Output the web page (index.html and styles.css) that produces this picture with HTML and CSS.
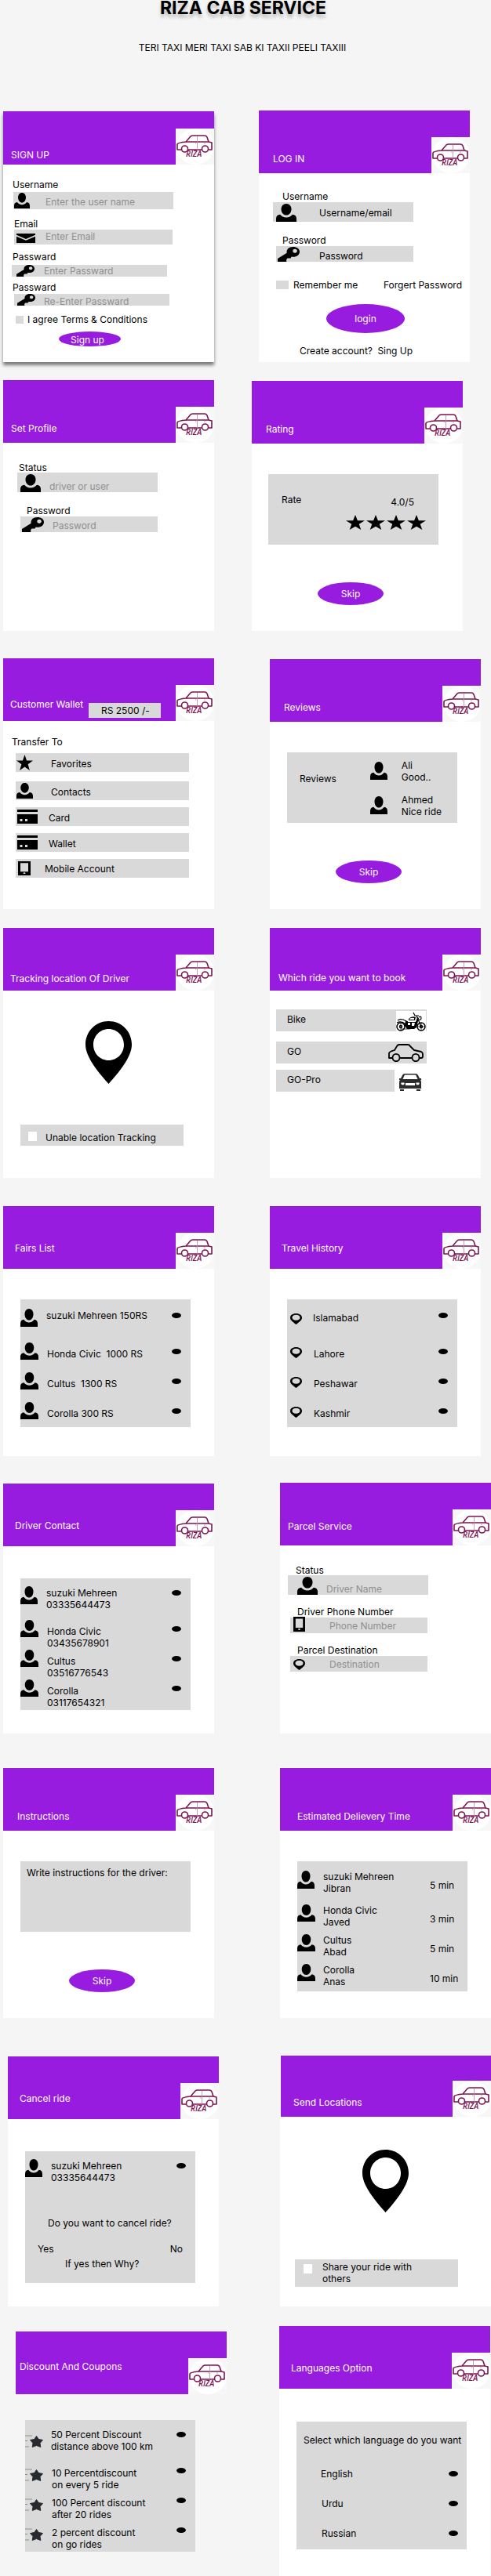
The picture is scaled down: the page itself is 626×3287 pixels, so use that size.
FILE: index.html
```
<!DOCTYPE html>
<html lang="en">
<head>
<meta charset="utf-8">
<meta name="viewport" content="width=device-width, initial-scale=1">
<title>Riza Cab Service</title>
<link rel="stylesheet" href="styles.css">
</head>
<body>
<svg class="sprite" width="0" height="0" aria-hidden="true">
  <symbol id="logo" viewBox="0 0 49 46">
    <rect width="49" height="46" fill="#f7f7f7"/>
    <ellipse cx="25" cy="23" rx="24" ry="23" fill="#fff"/>
    <g fill="none" stroke="#7d1552" stroke-width="1.6" stroke-linejoin="round">
      <path d="M7 27H2v-7q1-2 11-3l6-7q1-1 3-1h15q2 0 3 2l2 6"/>
      <path d="M13 17h29l4 1v9h-4M16 27h17"/>
      <circle cx="11.500" cy="26" r="4"/>
      <circle cx="37.500" cy="26" r="4"/>
    </g>
    <path d="M27.500 10v17M25 19h1.500M36 19h2" fill="none" stroke="#b98ba6" stroke-width="0.800"/>
    <text x="13" y="36" class="logo-text">RIZA</text>
  </symbol>
  <symbol id="user" viewBox="0 0 22 23" preserveAspectRatio="none">
    <path d="M11 0c3.400 0 5.500 3 5.500 7s-2.300 7.600-5.500 7.600S5.500 11 5.500 7 7.600 0 11 0z"/>
    <path d="M0 23v-4c0-3 1.500-5 4.300-5.200 1.600 2.400 3.900 3.600 6.700 3.600s5.100-1.200 6.700-3.600C20.500 14 22 16 22 19v4z"/>
  </symbol>
  <symbol id="key" viewBox="0 0 28 19" preserveAspectRatio="none">
    <path fill-rule="evenodd" d="M19.500 0C24.500 0 28 2.500 28 6.200s-3.500 6.600-8 6.600c-1 0-1.500 0-2.300-.2l-1.200 1.900h-4l-1.300 1.800V19H0v-4l11.600-7.300C11 3 14.500 0 19.500 0zM22 2.800a2.800 2.500 0 1 0 .1 0z"/>
  </symbol>
  <symbol id="mail" viewBox="0 0 24 13" preserveAspectRatio="none">
    <path d="M0 0h24v2L12 7.500 0 2zM0 4l12 5.500L24 4v9H0z"/>
  </symbol>
  <symbol id="star" viewBox="0 0 24 20" preserveAspectRatio="none">
    <path d="M12 0l2.900 7.500H24l-7.300 4.800L19.300 20 12 15.400 4.700 20l2.600-7.700L0 7.500h9.100z"/>
  </symbol>
  <symbol id="card" viewBox="0 0 26 18" preserveAspectRatio="none">
    <path fill-rule="evenodd" d="M0 0h26v3H0zM0 6h26v12H0zM3.500 12v3h3v-3zM10 12v3h3v-3z"/>
  </symbol>
  <symbol id="phone" viewBox="0 0 16 19" preserveAspectRatio="none">
    <path fill-rule="evenodd" d="M0 0h16v19H0zM3 2.500v11.500h10V2.500zM6.500 16a1.500 1 0 1 0 3 0 1.500 1 0 1 0-3 0z"/>
  </symbol>
  <symbol id="pin" viewBox="0 0 59 80">
    <path fill-rule="evenodd" d="M29.500 0C46 0 59 13 59 30c0 16-17 36-29.500 50C17 66 0 46 0 30 0 13 13 0 29.500 0zm0 10C18.500 10 10 19 10 30s8.500 20 19.500 20S49 41 49 30 40.500 10 29.500 10z"/>
  </symbol>
  <symbol id="marker" viewBox="0 0 15 14">
    <path fill-rule="evenodd" d="M7.500 0C12 0 15 2.300 15 5.500S11.500 11 7.500 14C3.500 11 0 8.700 0 5.500S3 0 7.500 0zm0 1.800C4.500 1.800 2.500 3.300 2.500 5.300s2 3.500 5 3.500 5-1.500 5-3.500-2-3.500-5-3.500z"/>
  </symbol>
  <symbol id="bike" viewBox="0 0 38 26">
    <rect width="38" height="26" fill="#fff"/>
    <g fill="none" stroke="#000" stroke-width="1.500">
      <circle cx="6" cy="20" r="5"/>
      <circle cx="32" cy="20" r="5"/>
      <circle cx="6" cy="20" r="1.500"/>
      <circle cx="32" cy="20" r="1.500"/>
      <path d="M22 2l2 4 5 0M26 6l6 14M2 12q3-2 7-1l6 3M1 15q6-3 11 2M29 8q3-2 3 1t-3 2" stroke-width="1.200"/>
      <path d="M6 23h12M6 15v10M27 20h10M32 15v10" stroke-width="0.700"/>
    </g>
    <path d="M12 12l3 2h10l2-6 2 1-3 12-3 2H14l-3-4zM16 10q4-4 9-2l-1 4h-8z"/>
    <path d="M15 15h3v3h-3zM20 15h4l-1 4h-3z" fill="#fff"/>
    <path d="M17 10q3-2 6-1v2h-6z" fill="#fff"/>
  </symbol>
  <symbol id="sedan" viewBox="0 0 45 23">
    <g fill="none" stroke="#000" stroke-width="1.800" stroke-linejoin="round">
      <path d="M6 18H1v-6q0-2 7-4l3-5q1-2 3-2h11q2 0 3 2l5 5 9 2q2 1 2 3v3q0 2-2 2h-2M15 18h15"/>
      <ellipse cx="10" cy="17.500" rx="4.500" ry="4.700"/>
      <ellipse cx="35" cy="17.500" rx="4.500" ry="4.700"/>
    </g>
  </symbol>
  <symbol id="front" viewBox="0 0 28 22">
    <path fill="#2b2b2b" fill-rule="evenodd" d="M7 0h14q2 0 3 2l2 4h2v2h-1q1 1 1 3v8H0v-8q0-2 1-3H0V6h2l2-4q1-2 3-2zM7 1.500L4.500 7h19L21 1.500zM8 12v3h12v-3zM2.500 11.500a2.200 2 0 1 0 4 0zM21.500 11.500a2.200 2 0 1 0 4 0zM1 20h5v2H1zM22 20h5v2h-5z"/>
  </symbol>
  <symbol id="faststar" viewBox="0 0 24 16">
    <path d="M0 1h9M0 7.500h3M0 15h5" stroke="#8f8f8f" stroke-width="1.200"/>
    <path d="M14.500 1.500l2.700 4 5.300 1-3.500 4 .8 5-5.300-2-5.300 2 .8-5-3.500-4 5.300-1z" fill="#272b30" stroke="#272b30" stroke-width="1" stroke-linejoin="round"/>
  </symbol>
</svg>

<header class="page-head">
  <h1>RIZA CAB SERVICE</h1>
  <p>TERI TAXI MERI TAXI SAB KI TAXII PEELI TAXIII</p>
</header>

<main>
  <div class="pair pair-a">
    <form class="screen signup">
      <div class="bar"><h2>SIGN UP</h2><svg class="logo" role="img" aria-label="Riza logo"><use href="#logo"/></svg></div>
      <div class="body">
        <div class="field">
          <label for="su-name">Username</label>
          <div class="box"><svg class="icon" width="20" height="20"><use href="#user"/></svg><input id="su-name" type="text" placeholder="Enter the user name"></div>
        </div>
        <div class="field email">
          <label for="su-mail">Email</label>
          <div class="box"><svg class="icon" width="24" height="12"><use href="#mail"/></svg><input id="su-mail" type="email" placeholder="Enter Email"></div>
        </div>
        <div class="field pass">
          <label for="su-pass">Passward</label>
          <div class="box"><svg class="icon" width="23" height="15"><use href="#key"/></svg><input id="su-pass" type="password" placeholder="Enter Passward"></div>
        </div>
        <div class="field repeat">
          <label for="su-again">Passward</label>
          <div class="box"><svg class="icon" width="23" height="15"><use href="#key"/></svg><input id="su-again" type="password" placeholder="Re-Enter Passward"></div>
        </div>
        <label class="check"><input type="checkbox"><span>I agree Terms &amp; Conditions</span></label>
        <button class="oval small" type="button">Sign up</button>
      </div>
    </form>

    <form class="screen login">
      <div class="bar"><h2>LOG IN</h2><svg class="logo" role="img" aria-label="Riza logo"><use href="#logo"/></svg></div>
      <div class="body">
        <div class="field">
          <label for="li-name">Username</label>
          <div class="box"><svg class="icon" width="26" height="23"><use href="#user"/></svg><input id="li-name" type="text" placeholder="Username/email"></div>
        </div>
        <div class="field pass">
          <label for="li-pass">Password</label>
          <div class="box"><svg class="icon" width="28" height="19"><use href="#key"/></svg><input id="li-pass" type="password" placeholder="Password"></div>
        </div>
        <div class="options">
          <label class="check"><input type="checkbox"><span>Remember me</span></label>
          <a href="#forgot">Forgert Password</a>
        </div>
        <button class="oval large" type="button">login</button>
        <p class="create">Create account? <a href="#signup">Sing Up</a></p>
      </div>
    </form>
  </div>

  <div class="pair pair-b">
    <form class="screen profile">
      <div class="bar"><h2>Set Profile</h2><svg class="logo" role="img" aria-label="Riza logo"><use href="#logo"/></svg></div>
      <div class="body">
        <div class="field tight">
          <label for="sp-status">Status</label>
          <div class="box"><svg class="icon" width="26" height="23"><use href="#user"/></svg><input id="sp-status" type="text" placeholder="driver or user"></div>
        </div>
        <div class="field tight pass">
          <label for="sp-pass">Password</label>
          <div class="box"><svg class="icon" width="28" height="19"><use href="#key"/></svg><input id="sp-pass" type="password" placeholder="Password"></div>
        </div>
      </div>
    </form>

    <section class="screen lined rating">
      <div class="bar"><h2>Rating</h2><svg class="logo" role="img" aria-label="Riza logo"><use href="#logo"/></svg></div>
      <div class="body">
        <div class="panel">
          <span>Rate</span>
          <div class="score">
            <span>4.0/5</span>
            <div class="stars" role="img" aria-label="4 stars">
              <svg width="24" height="19"><use href="#star"/></svg>
              <svg width="24" height="19"><use href="#star"/></svg>
              <svg width="24" height="19"><use href="#star"/></svg>
              <svg width="24" height="19"><use href="#star"/></svg>
            </div>
          </div>
        </div>
        <button class="oval" type="button">Skip</button>
      </div>
    </section>
  </div>

  <div class="pair pair-c">
    <section class="screen wallet">
      <div class="bar"><h2>Customer Wallet</h2><output class="balance">RS 2500 /-</output><svg class="logo" role="img" aria-label="Riza logo"><use href="#logo"/></svg></div>
      <div class="body">
        <h3>Transfer To</h3>
        <ul class="targets">
          <li><svg width="21" height="20"><use href="#star"/></svg><span>Favorites</span></li>
          <li><svg width="21" height="20"><use href="#user"/></svg><span>Contacts</span></li>
          <li class="near"><svg width="26" height="18"><use href="#card"/></svg><span>Card</span></li>
          <li class="near"><svg width="26" height="18"><use href="#card"/></svg><span>Wallet</span></li>
          <li class="near phone"><svg width="16" height="18"><use href="#phone"/></svg><span>Mobile Account</span></li>
        </ul>
      </div>
    </section>

    <section class="screen lined reviews">
      <div class="bar"><h2>Reviews</h2><svg class="logo" role="img" aria-label="Riza logo"><use href="#logo"/></svg></div>
      <div class="body">
        <div class="panel">
          <h3>Reviews</h3>
          <ul>
            <li><svg width="22" height="23"><use href="#user"/></svg><span>Ali<br>Good..</span></li>
            <li><svg width="22" height="23"><use href="#user"/></svg><span>Ahmed<br>Nice ride</span></li>
          </ul>
        </div>
        <button class="oval" type="button">Skip</button>
      </div>
    </section>
  </div>

  <div class="pair pair-d">
    <section class="screen lined tracking">
      <div class="bar"><h2>Tracking location Of Driver</h2><svg class="logo" role="img" aria-label="Riza logo"><use href="#logo"/></svg></div>
      <div class="body">
        <svg class="pin" width="59" height="80" role="img" aria-label="Location"><use href="#pin"/></svg>
        <label class="check strip"><input type="checkbox"><span>Unable location Tracking</span></label>
      </div>
    </section>

    <section class="screen lined rides">
      <div class="bar"><h2>Which ride you want to book</h2><svg class="logo" role="img" aria-label="Riza logo"><use href="#logo"/></svg></div>
      <div class="body">
        <ul>
          <li><span>Bike</span><svg class="bike" width="38" height="26"><use href="#bike"/></svg></li>
          <li><span>GO</span><svg class="sedan" width="45" height="23"><use href="#sedan"/></svg></li>
          <li class="split"><span>GO-Pro</span><svg width="28" height="22"><use href="#front"/></svg></li>
        </ul>
      </div>
    </section>
  </div>

  <div class="pair pair-e">
    <section class="screen lined fairs">
      <div class="bar"><h2>Fairs List</h2><svg class="logo" role="img" aria-label="Riza logo"><use href="#logo"/></svg></div>
      <div class="body">
        <div class="panel list">
          <label><svg width="22" height="23"><use href="#user"/></svg><span>suzuki Mehreen 150RS</span><input type="radio" name="fair"></label>
          <label><svg width="23" height="22"><use href="#user"/></svg><span>Honda Civic&nbsp; 1000 RS</span><input type="radio" name="fair"></label>
          <label><svg width="23" height="22"><use href="#user"/></svg><span>Cultus&nbsp; 1300 RS</span><input type="radio" name="fair"></label>
          <label><svg width="23" height="22"><use href="#user"/></svg><span>Corolla 300 RS</span><input type="radio" name="fair"></label>
        </div>
      </div>
    </section>

    <section class="screen lined travel">
      <div class="bar"><h2>Travel History</h2><svg class="logo" role="img" aria-label="Riza logo"><use href="#logo"/></svg></div>
      <div class="body">
        <div class="panel list">
          <label><svg width="15" height="14"><use href="#marker"/></svg><span>Islamabad</span><input type="radio" name="trip"></label>
          <label><svg width="15" height="14"><use href="#marker"/></svg><span>Lahore</span><input type="radio" name="trip"></label>
          <label><svg width="15" height="14"><use href="#marker"/></svg><span>Peshawar</span><input type="radio" name="trip"></label>
          <label><svg width="15" height="14"><use href="#marker"/></svg><span>Kashmir</span><input type="radio" name="trip"></label>
        </div>
      </div>
    </section>
  </div>

  <div class="pair pair-f">
    <section class="screen lined contact">
      <div class="bar"><h2>Driver Contact</h2><svg class="logo" role="img" aria-label="Riza logo"><use href="#logo"/></svg></div>
      <div class="body">
        <div class="panel list">
          <label><svg width="22" height="23"><use href="#user"/></svg><span>suzuki Mehreen<br>03335644473</span><input type="radio" name="driver"></label>
          <label><svg width="23" height="22"><use href="#user"/></svg><span>Honda Civic<br>03435678901</span><input type="radio" name="driver"></label>
          <label><svg width="23" height="22"><use href="#user"/></svg><span>Cultus<br>03516776543</span><input type="radio" name="driver"></label>
          <label><svg width="23" height="22"><use href="#user"/></svg><span>Corolla<br>03117654321</span><input type="radio" name="driver"></label>
        </div>
      </div>
    </section>

    <form class="screen parcel">
      <div class="bar"><h2>Parcel Service</h2><svg class="logo" role="img" aria-label="Riza logo"><use href="#logo"/></svg></div>
      <div class="body">
        <div class="field tight status">
          <label for="pa-name">Status</label>
          <div class="box"><svg class="icon" width="26" height="23"><use href="#user"/></svg><input id="pa-name" type="text" placeholder="Driver Name"></div>
        </div>
        <div class="field tight">
          <label for="pa-phone">Driver Phone Number</label>
          <div class="box"><svg class="icon" width="15" height="19"><use href="#phone"/></svg><input id="pa-phone" type="tel" placeholder="Phone Number"></div>
        </div>
        <div class="field tight">
          <label for="pa-dest">Parcel Destination</label>
          <div class="box"><svg class="icon" width="15" height="14"><use href="#marker"/></svg><input id="pa-dest" type="text" placeholder="Destination"></div>
        </div>
      </div>
    </form>
  </div>

  <div class="pair pair-f pair-g">
    <form class="screen lined instructions">
      <div class="bar"><h2>Instructions</h2><svg class="logo" role="img" aria-label="Riza logo"><use href="#logo"/></svg></div>
      <div class="body">
        <textarea aria-label="Instructions" placeholder="Write instructions for the driver:"></textarea>
        <button class="oval" type="button">Skip</button>
      </div>
    </form>

    <section class="screen lined estimate">
      <div class="bar"><h2>Estimated Delievery Time</h2><svg class="logo" role="img" aria-label="Riza logo"><use href="#logo"/></svg></div>
      <div class="body">
        <ul class="panel list">
          <li><svg width="22" height="23"><use href="#user"/></svg><span>suzuki Mehreen<br>Jibran</span><time>5 min</time></li>
          <li><svg width="23" height="22"><use href="#user"/></svg><span>Honda Civic<br>Javed</span><time>3 min</time></li>
          <li><svg width="23" height="22"><use href="#user"/></svg><span>Cultus<br>Abad</span><time>5 min</time></li>
          <li><svg width="23" height="22"><use href="#user"/></svg><span>Corolla<br>Anas</span><time>10 min</time></li>
        </ul>
      </div>
    </section>
  </div>

  <div class="pair pair-h">
    <section class="screen lined cancel">
      <div class="bar"><h2>Cancel ride</h2><svg class="logo" role="img" aria-label="Riza logo"><use href="#logo"/></svg></div>
      <div class="body">
        <div class="panel list">
          <label><svg width="22" height="23"><use href="#user"/></svg><span>suzuki Mehreen<br>03335644473</span><input type="radio" name="cancel"></label>
          <p class="ask">Do you want to cancel ride?</p>
          <div class="answers"><button type="button">Yes</button><button type="button">No</button></div>
          <p class="why">If yes then Why?</p>
        </div>
      </div>
    </section>

    <section class="screen send">
      <div class="bar"><h2>Send Locations</h2><svg class="logo" role="img" aria-label="Riza logo"><use href="#logo"/></svg></div>
      <div class="body">
        <svg class="pin" width="59" height="80" role="img" aria-label="Location"><use href="#pin"/></svg>
        <label class="check strip"><input type="checkbox"><span>Share your ride with<br>others</span></label>
      </div>
    </section>
  </div>

  <div class="pair pair-i">
    <section class="screen coupons">
      <div class="bar"><h2>Discount And Coupons</h2><svg class="logo" role="img" aria-label="Riza logo"><use href="#logo"/></svg></div>
      <div class="body">
        <div class="panel list">
          <label><svg width="24" height="16"><use href="#faststar"/></svg><span>50 Percent Discount<br>distance above 100 km</span><input type="radio" name="coupon"></label>
          <label><svg width="24" height="16"><use href="#faststar"/></svg><span>10 Percentdiscount<br>on every 5 ride</span><input type="radio" name="coupon"></label>
          <label><svg width="24" height="16"><use href="#faststar"/></svg><span>100 Percent discount<br>after 20 rides</span><input type="radio" name="coupon"></label>
          <label><svg width="24" height="16"><use href="#faststar"/></svg><span>2 percent discount<br>on go rides</span><input type="radio" name="coupon"></label>
        </div>
      </div>
    </section>

    <section class="screen languages">
      <div class="bar"><h2>Languages Option</h2><svg class="logo" role="img" aria-label="Riza logo"><use href="#logo"/></svg></div>
      <div class="body">
        <div class="panel">
          <p>Select which language do you want</p>
          <label><span>English</span><input type="radio" name="lang"></label>
          <label><span>Urdu</span><input type="radio" name="lang"></label>
          <label><span>Russian</span><input type="radio" name="lang"></label>
        </div>
      </div>
    </section>
  </div>
</main>
</body>
</html>
```

FILE: styles.css
```
* {
  box-sizing: border-box;
}

body {
  margin: 0;
  background: #f5f5f5;
  color: #000;
  font: 12px/15px Inter, "Liberation Sans", sans-serif;
}

h1, h2, h3, p, ul {
  margin: 0;
  padding: 0;
  font-size: 12px;
  font-weight: 400;
}

ul {
  list-style: none;
}

a {
  color: inherit;
  text-decoration: none;
}

svg {
  display: block;
  flex: none;
}

input, button, textarea {
  font: inherit;
  color: inherit;
  margin: 0;
  padding: 0;
  border: 0;
  background: none;
}

.sprite {
  display: none;
}

.logo-text {
  font: italic 600 10px "Open Sans", sans-serif;
  fill: #7d1552;
}

/* Page heading */

.page-head {
  height: 141px;
  text-align: center;
}

.page-head h1 {
  padding-right: 6px;
  font-size: 23px;
  line-height: 20px;
  font-weight: 700;
  text-shadow: 0 4px 4px rgba(0, 0, 0, 0.25);
}

.page-head p {
  padding: 33px 8px 0 0;
}

/* Pairs of screens */

.pair {
  display: flex;
  gap: 71px;
  padding: 0 13px 0 4px;
}

.pair-a { gap: 57px; padding-right: 27px; }
.pair-b { gap: 48px; padding-right: 36px; margin-top: 23px; }
.pair-c { margin-top: 35px; }
.pair-d { margin-top: 23px; }
.pair-e { margin-top: 35px; }
.pair-f { gap: 84px; padding-right: 0; margin-top: 34px; }
.pair-g { margin-top: 43px; }
.pair-h { gap: 78px; padding: 0 0 0 10px; margin-top: 48px; }
.pair-i { gap: 67px; padding: 0 1px 0 20px; margin-top: 25px; }

.screen {
  flex: 1 1 0;
  min-width: 0;
  min-height: 320px;
  background: #fff;
}

.lined {
  padding-top: 1px;
}

.bar {
  display: flex;
  align-items: flex-end;
  height: 80px;
  background: #971cdf;
  color: #fff;
}

.bar h2 {
  padding: 0 0 11px 18px;
  white-space: nowrap;
}

.logo {
  width: 49px;
  height: 46px;
  margin-left: auto;
}

.panel {
  margin: 0 30px 0 22px;
  background: #d9d9d9;
}

/* Fields */

.field label {
  display: block;
  padding-left: 12px;
}

.tight label {
  line-height: 12px;
}

.box {
  display: flex;
  align-items: flex-end;
  background: #d9d9d9;
}

.box input {
  flex: 1;
  min-width: 0;
  height: 15px;
}

.box input::placeholder {
  color: #8f8f8f;
  opacity: 1;
}

.check {
  display: flex;
  align-items: center;
}

.check input {
  appearance: none;
  flex: none;
  background: #d9d9d9;
}

.strip {
  background: #d9d9d9;
}

.strip input {
  width: 11px;
  height: 12px;
  background: #fff;
}

.oval {
  display: block;
  width: 84px;
  height: 29px;
  margin: 48px 0 0 84px;
  border-radius: 50%;
  background: #971cdf;
  color: #fff;
}

.panel input {
  appearance: none;
  width: 12px;
  height: 7px;
  border-radius: 50%;
  background: #000;
}

/* Sign up */

.signup {
  margin-top: 1px;
  box-shadow: 0 4px 4px rgba(0, 0, 0, 0.5);
}

.signup .bar { height: 68px; }
.signup .bar h2 { padding: 0 0 5px 10px; }
.signup .body { padding-top: 18px; }
.signup .box { height: 22px; margin: 2px 52px 0 13px; padding-bottom: 1px; }
.signup .box .icon { margin-left: 1px; }
.signup .box input { margin-left: 20px; height: 18px; }
.signup .email { margin-top: 11px; }
.signup .email label { padding-left: 14px; }
.signup .email .box { height: 19px; margin: 0 53px 0 14px; padding-bottom: 2px; }
.signup .email .icon { margin-left: 3px; }
.signup .email input { margin-left: 13px; }
.signup .pass { margin-top: 8px; }
.signup .pass .box { height: 15px; margin: 3px 60px 0 11px; padding: 0; }
.signup .pass .icon { margin-left: 6px; }
.signup .pass input { margin-left: 12px; height: 15px; }
.signup .repeat { margin-top: 6px; }
.signup .repeat .box { height: 15px; margin: 1px 57px 0 14px; padding: 0; }
.signup .repeat .icon { margin-left: 4px; }
.signup .repeat input { margin-left: 11px; height: 12px; }
.signup .check { margin: 10px 0 0 16px; gap: 5px; }
.signup .check input { width: 10px; height: 10px; }
.signup .small { width: 79px; height: 19px; margin: 8px 0 0 71px; padding: 2px 6px 0 0; }

/* Log in */

.login .body { padding-top: 22px; }
.login .field label { padding-left: 30px; }
.login .box { height: 25px; margin: 0 72px 0 18px; }
.login .icon { margin-left: 4px; }
.login .box input { margin-left: 29px; height: 23px; }
.login .box input::placeholder { color: #000; }
.login .pass { margin-top: 16px; }
.login .pass .box { height: 20px; margin-left: 22px; }
.login .pass .icon { margin-left: 2px; }
.login .pass input { margin-left: 25px; height: 15px; }
.login .options { display: flex; justify-content: space-between; margin: 22px 10px 0 22px; }
.login .check { gap: 6px; }
.login .check input { width: 16px; height: 11px; }
.login .large { width: 100px; height: 37px; margin: 17px 0 0 86px; }
.login .create { padding: 15px 0 0 52px; }
.login .create a { margin-left: 3px; }

/* Set profile */

.profile .bar h2 { padding-left: 10px; }
.profile .body { padding-top: 26px; }
.profile label { padding-left: 20px; }
.profile .box { height: 25px; margin: 0 72px 0 18px; }
.profile .icon { margin-left: 4px; }
.profile .box input { margin-left: 11px; }
.profile .pass { margin-top: 18px; }
.profile .pass label { padding-left: 30px; }
.profile .pass .box { height: 20px; margin: 1px 72px 0 22px; }
.profile .pass .icon { margin-left: 2px; }
.profile .pass input { height: 18px; }

/* Rating */

.rating .body { padding-top: 39px; }
.rating .panel { display: flex; justify-content: space-between; height: 90px; margin: 0 31px 0 21px; padding: 25px 16px 0 17px; }
.rating .score { padding-top: 3px; }
.rating .score span { display: block; margin-right: 15px; text-align: right; }
.rating .stars { display: flex; gap: 2px; padding-top: 9px; }

/* Customer wallet */

.wallet .bar h2 { padding: 0 0 14px 9px; }
.balance { width: 92px; height: 19px; margin: 0 19px 4px auto; padding: 2px 0 0 16px; background: #d9d9d9; color: #000; }
.wallet .logo { margin-left: 0; }
.wallet .body { padding: 19px 32px 0 16px; }
.wallet h3 { margin: 0 0 7px -5px; }
.targets { display: flex; flex-direction: column; }
.targets li { display: flex; align-items: center; height: 24px; margin-bottom: 12px; padding: 0 0 0 1px; background: #d9d9d9; }
.targets li + li { margin-bottom: 9px; }
.targets span { margin: 3px 0 0 23px; }
.targets .near svg { margin-left: 1px; }
.targets .near span { margin: 2px 0 0 14px; }
.targets .phone svg { margin-left: 2px; }
.targets .phone span { margin: 0 0 0 18px; }

/* Reviews */

.reviews .body { padding-top: 39px; }
.reviews .panel { display: flex; justify-content: space-between; height: 90px; padding: 9px 20px 0 16px; }
.reviews h3 { padding-top: 17px; }
.reviews li { display: flex; gap: 18px; margin-bottom: 14px; }
.reviews svg { margin-top: 3px; }

/* Tracking and sending locations */

.tracking .bar h2 { padding: 0 0 8px 9px; }
.tracking .body { padding: 39px 39px 0 22px; }
.pin { margin-left: 83px; }
.strip { height: 27px; margin-top: 52px; padding: 2px 0 0 10px; gap: 11px; }
.strip span { padding-top: 3px; }
.send .bar { height: 78px; margin-left: 1px; }
.send .bar h2 { padding-left: 16px; }
.send .body { padding: 42px 42px 0 19px; }
.send .pin { margin-left: 86px; }
.send .strip { height: 35px; margin-top: 60px; padding: 0 0 2px 11px; gap: 13px; }
.send .strip input { align-self: flex-start; margin-top: 6px; }
.send .strip span { padding: 0; }

/* Ride choice */

.rides .bar h2 { padding: 0 0 9px 11px; }
.rides .body { padding: 24px 69px 0 8px; }
.rides li { display: flex; justify-content: space-between; align-items: flex-end; height: 28px; margin-bottom: 8px; background: #d9d9d9; }
.rides li:first-child { margin-bottom: 13px; }
.rides span { align-self: flex-start; padding: 5px 0 0 14px; }
.rides .bike { margin-right: 1px; }
.rides .sedan { margin: 0 4px 2px 0; }
.rides .split { background: none; }
.rides .split span { flex: 1; height: 28px; margin-right: 6px; background: #d9d9d9; }
.rides .split svg { margin: 0 7px 1px 0; }

/* Lists with an icon, a text and a mark */

.list label, .list li {
  display: grid;
  grid-template-columns: 33px 1fr auto;
  align-items: start;
  height: 38px;
}

.list label:first-child, .list li:first-child { height: 43px; }
.list label span { padding: 7px 0 0 1px; }
.list label:first-child span { padding: 1px 0 0; }
.list label input { margin: 8px 12px 0 0; }
.list label:first-child input { margin-top: 5px; }

.fairs .bar h2, .travel .bar h2 { padding: 0 0 19px 15px; }
.fairs .body, .travel .body { padding-top: 39px; }
.fairs .list, .travel .list { height: 163px; padding-top: 12px; }
.travel svg:not(.logo) { margin: 6px 0 0 4px; }
.travel .list label:first-child span { padding-top: 4px; }

.contact .bar h2 { padding: 0 0 19px 15px; }
.contact .body { padding-top: 41px; }
.contact .list { height: 168px; padding-top: 10px; }

/* Parcel service */

.parcel .bar h2 { padding: 0 0 17px 10px; }
.parcel .body { padding-top: 26px; }
.parcel label { padding-left: 22px; }
.parcel .field + .field { margin-top: 16px; }
.parcel .box { height: 20px; margin: 1px 81px 0 13px; padding-bottom: 2px; }
.parcel .icon { margin-left: 4px; }
.parcel .box input { margin-left: 31px; }
.parcel .status label { padding-left: 20px; }
.parcel .status .box { height: 25px; margin: 0 80px 0 10px; padding: 0; }
.parcel .status .icon { margin-left: 12px; }
.parcel .status input { margin-left: 11px; height: 16px; }

/* Instructions */

.instructions .body { padding: 39px 30px 0 22px; }
.instructions textarea { display: block; width: 100%; height: 90px; padding: 7px 8px; background: #d9d9d9; resize: none; }
.instructions textarea::placeholder { color: #000; opacity: 1; }
.instructions .oval { margin-left: 62px; }

/* Estimated delivery time */

.estimate .bar h2 { padding-left: 22px; }
.estimate .body { padding-top: 39px; }
.estimate .list { height: 166px; padding-top: 12px; }
.estimate time { width: 48px; padding-top: 11px; }

/* Cancel ride */

.cancel .bar h2 { padding: 0 0 19px 15px; }
.cancel .body { padding-top: 41px; }
.cancel .list { height: 168px; padding-top: 10px; }
.ask { padding: 31px 0 0 29px; }
.answers { display: flex; justify-content: space-between; padding: 18px 16px 4px; }
.why { padding-left: 51px; }

/* Discounts */

.coupons { margin-top: 7px; background: none; min-height: 312px; }
.coupons .bar h2 { padding: 0 0 28px 5px; }
.coupons .body { padding-top: 33px; }
.coupons .list { height: 168px; margin: 0 40px 0 12px; padding-top: 10px; }
.coupons svg:not(.logo) { margin-top: 9px; }

/* Languages */

.languages { min-height: 319px; }
.languages .bar h2 { padding: 0 0 19px 15px; }
.languages .body { padding-top: 42px; }
.languages .panel { height: 163px; padding: 16px 0 0 9px; }
.languages p { padding-bottom: 28px; white-space: nowrap; }
.languages label { display: flex; justify-content: space-between; height: 38px; padding: 0 11px 0 23px; }
.languages label:first-of-type { padding-left: 22px; }
.languages label input { margin-top: 4px; }
```
